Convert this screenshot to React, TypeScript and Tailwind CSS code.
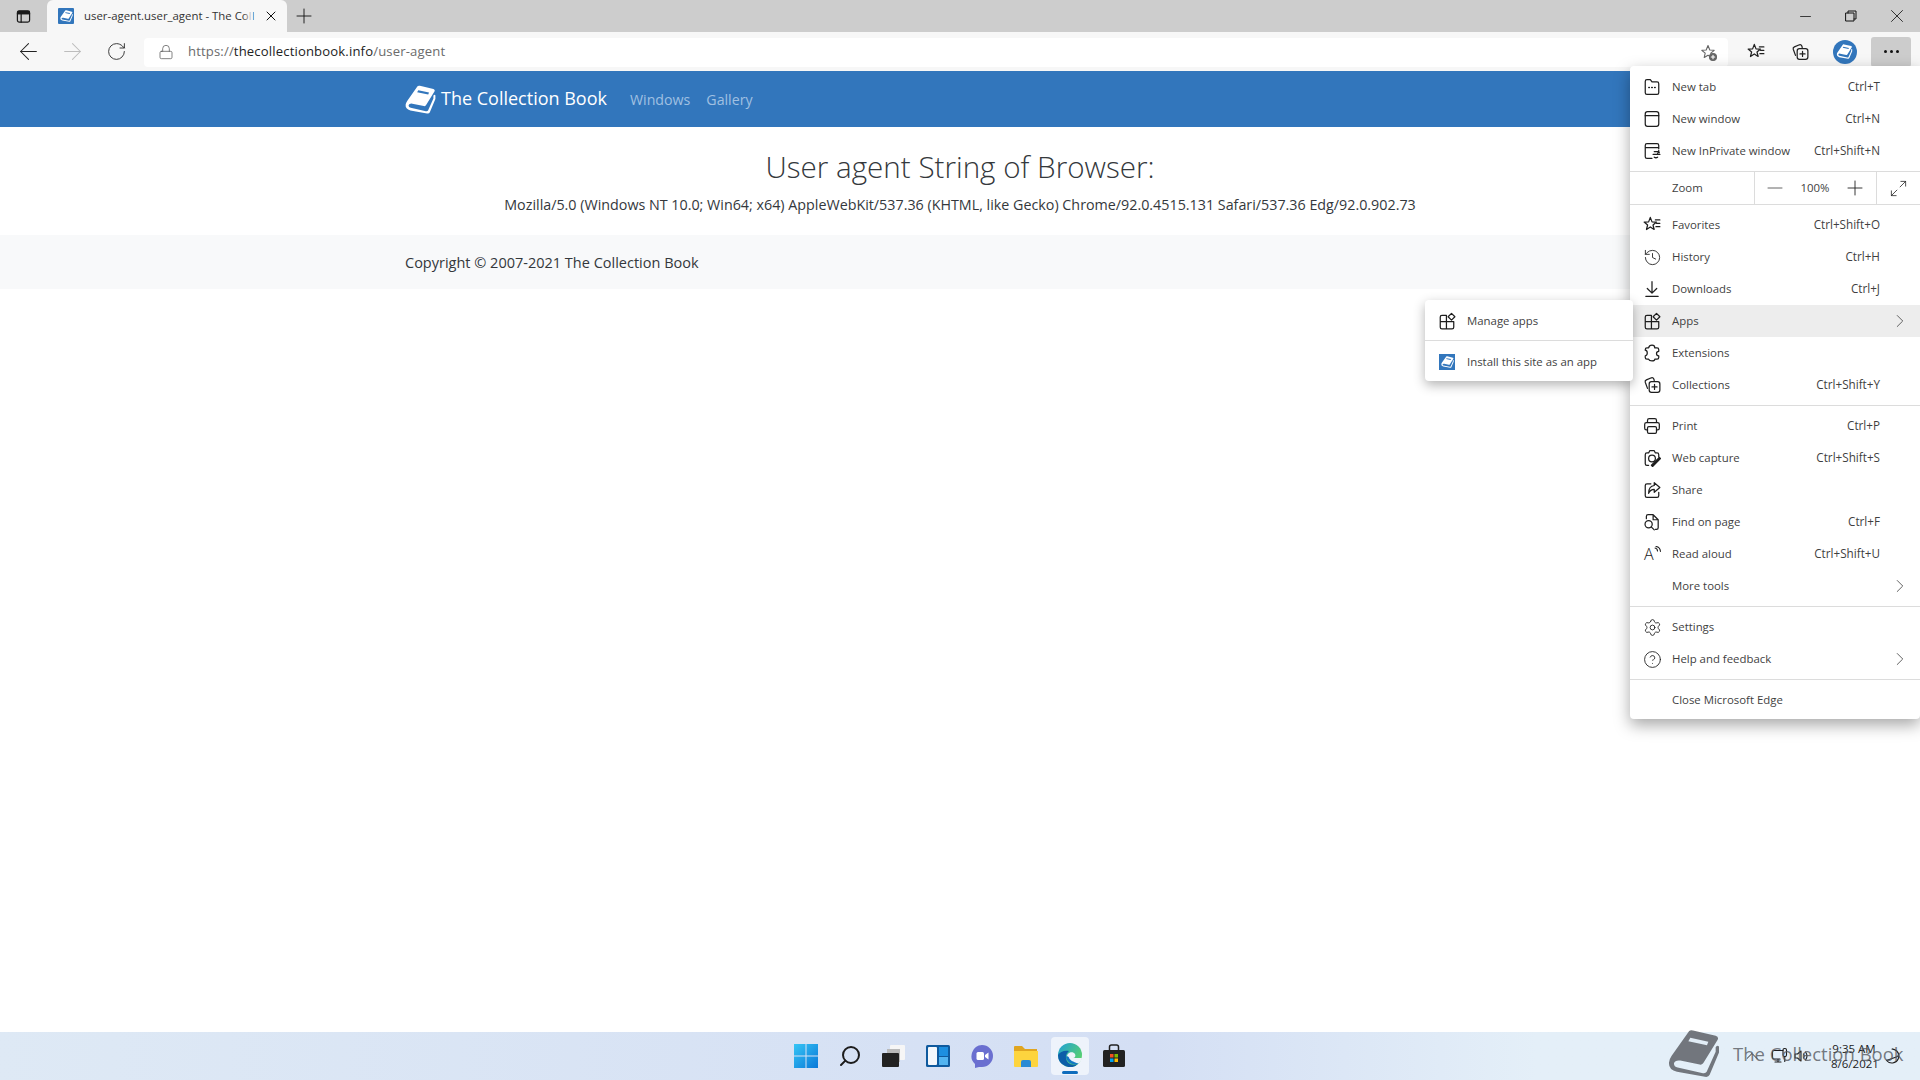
import { ReactNode } from "react";
import {
  ArrowLeft,
  ArrowRight,
  ChevronRight,
  ChevronUp,
  CircleHelp,
  History,
  Lock,
  Maximize2,
  Minus,
  Plus,
  RotateCw,
  Search,
  Settings,
  X,
} from "lucide-react";

const uiFont = "font-['Open_Sans','Noto_Sans',sans-serif]";

const Book = ({ className, cover = "#ffffff", cut = "#3276bc" }: { className?: string; cover?: string; cut?: string }) => (
  <svg viewBox="25 18 156 146" className={className}>
    <path
      fill={cover}
      d="M88 24 Q92 20 100 22 L168 38 Q178 41 174 50 L132 118 Q128 126 120 124 L62 112 Q46 110 43 120 Q42 130 54 133 L130 150 Q138 151 141 146 L168 86 V72 Q172 64 178 70 V88 L150 155 Q146 163 136 161 L52 146 Q26 140 28 118 Q29 108 36 98 Z"
    />
    <path fill={cut} d="M92 44 L146 56 L142 66 L86 54 Z" />
  </svg>
);

const line = { fill: "none", stroke: "currentColor", strokeWidth: 1.1, strokeLinecap: "round", strokeLinejoin: "round" } as const;

const Ico = ({ children, className = "w-[18px] h-[18px]" }: { children: ReactNode; className?: string }) => (
  <svg viewBox="0 0 16 16" className={className} {...line}>
    {children}
  </svg>
);

const FavStar = ({ className }: { className?: string }) => (
  <Ico className={className}>
    <path d="M6.500 1.200 8 5.200l4 .2-3.100 2.600 1 4-3.400-2.300-3.400 2.300 1-4L1 5.400l4-.2z" />
    <path d="M11 3.500h4M12 6.500h3M11.500 9.500h3.500" />
  </Ico>
);

const CollectionsIcon = ({ className }: { className?: string }) => (
  <Ico className={className}>
    <path d="M4 11 2 5.500Q1.500 4 3 3.400L7.500 1.600Q9 1.200 9.600 2.600L10 4" />
    <rect x="5.500" y="5" width="9.500" height="9.500" rx="2" />
    <path d="M10.250 7.500v4.500M8 9.750h4.500" />
  </Ico>
);

const AppsIcon = ({ className }: { className?: string }) => (
  <Ico className={className}>
    <path d="M7.500 3H3.500Q2 3 2 4.500v9Q2 15 3.500 15h9q1.500 0 1.500-1.500V8.500H7.500V3ZM7.500 8.500V15M2 8.500h5.500" />
    <path d="m12 1.200 3 3-3 3-3-3z" />
  </Ico>
);

const menuIcons: Record<string, ReactNode> = {
  "New tab": (
    <Ico>
      <path d="M2 4V3q0-1.500 1.500-1.500h3L8 3.500h4.500Q14 3.500 14 5v8q0 1.500-1.500 1.500h-9Q2 14.500 2 13Z" />
      <path d="M5.200 8.500h.4M7.800 8.500h.4M10.400 8.500h.4" strokeWidth="1.400" />
    </Ico>
  ),
  "New window": (
    <Ico>
      <rect x="2" y="1.500" width="12" height="13" rx="2" />
      <path d="M2 5h12" />
    </Ico>
  ),
  "New InPrivate window": (
    <Ico>
      <path d="M8 14.500H3.500Q2 14.500 2 13V3Q2 1.500 3.500 1.500h9Q14 1.500 14 3v3M2 5h12" />
      <path d="M10 8.500h3.500q1 0 1 1M9 11h6M10 13.500q1.500 1 3 0M13 10q1.500-1 1-2.500" />
    </Ico>
  ),
  Favorites: <FavStar className="w-[18px] h-[18px]" />,
  History: <History className="w-[19px] h-[19px]" strokeWidth={1.1} />,
  Downloads: (
    <Ico>
      <path d="M8 1.500v10M3.800 7.500 8 11.700l4.200-4.200M2.500 14.500h11" />
    </Ico>
  ),
  Apps: <AppsIcon className="w-[18px] h-[18px]" />,
  Extensions: (
    <Ico>
      <path d="M5 3.500q.5-2.500 3-2.500t2.500 2.500h2q1.500 0 1.500 1.500v1.500q-2 0-2 2t2 2v1.500q0 1.500-1.500 1.500h-2q0 1.500-2.500 1.500T5 13.500H3.500Q2 13.500 2 12v-1.500q1.800-.3 1.800-2.500T2 5.500V5q0-1.500 1.500-1.500Z" />
    </Ico>
  ),
  Collections: <CollectionsIcon className="w-[18px] h-[18px]" />,
  Print: (
    <Ico>
      <path d="M4 5V3q0-1.500 1.500-1.500h5Q12 1.500 12 3v2M4 11.500H3Q1.500 11.500 1.500 10V6.500Q1.500 5 3 5h10q1.500 0 1.500 1.500V10q0 1.500-1.500 1.500h-1" />
      <rect x="4" y="8.500" width="8" height="6" rx="1.200" />
    </Ico>
  ),
  "Web capture": (
    <Ico>
      <path d="M5 14.500H3.500Q2 14.500 2 13V5q0-1.500 1.500-1.500H5l1-2h4l1 2h1.500Q14 3.500 14 5v2" />
      <circle cx="8" cy="8.500" r="3" />
      <path d="M7.500 14.500 14.500 7.500 15.500 8.500 8.500 15.500Z" fill="currentColor" />
    </Ico>
  ),
  Share: (
    <Ico>
      <path d="M7 2.500H3.500Q2 2.500 2 4v9q0 1.500 1.500 1.500h9Q14 14.500 14 13v-3" />
      <path d="M10 1.500 15 5.700 10 10V7.500Q6.500 7.500 5 11 5 4.500 10 4Z" />
    </Ico>
  ),
  "Find on page": (
    <Ico>
      <path d="M3 5V3q0-1.500 1.500-1.500H9L13.500 6v7q0 1.500-1.500 1.500h-1M9 1.500V6h4.500" />
      <circle cx="5" cy="10" r="3.200" />
      <path d="m7.300 12.300 2.700 2.700" />
    </Ico>
  ),
  Settings: <Settings className="w-[19px] h-[19px]" strokeWidth={1.1} />,
  "Help and feedback": <CircleHelp className="w-[19px] h-[19px]" strokeWidth={1.1} />,
};

const Row = ({ label, keys, more, active }: { label: string; keys?: string; more?: boolean; active?: boolean }) => (
  <div className={`flex h-8 items-center pl-[14px] pr-[40px] relative ${active ? "bg-[#ededed]" : ""}`}>
    <span className="w-[28px] flex items-center text-[#1e1e1e] -ml-px mr-px">
      {label === "Read aloud" ? (
        <span className="relative flex items-center ml-px">
          <span className="text-[16px] leading-none font-light text-[#222]">A</span>
          <svg viewBox="0 0 8 8" className="w-2 h-2 -mt-2 text-[#222]" {...line}>
            <path d="M1 2q2.500.5 2.500 3M2 .5q4 .5 4.500 5" />
          </svg>
        </span>
      ) : (
        menuIcons[label]
      )}
    </span>
    <span className="flex-1 text-[#3f3f3f]">{label}</span>
    {keys && <span className="text-[#3f3f3f] text-[11.700px]">{keys}</span>}
    {more && <ChevronRight className="absolute right-[9px] w-[22px] h-[22px] text-[#555]" strokeWidth={1} />}
  </div>
);

const Rule = () => <div className="h-px bg-[#dcdcdc] my-1" />;

const BrowserMenu = () => (
  <div className="absolute left-[1630px] top-[66px] w-[290px] h-[653px] bg-white rounded-l-[4px] rounded-br-[4px] shadow-[0_6px_16px_rgba(0,0,0,0.35)] text-[11.400px] pt-[5px] z-10">
    <Row label="New tab" keys="Ctrl+T" />
    <Row label="New window" keys="Ctrl+N" />
    <Row label="New InPrivate window" keys="Ctrl+Shift+N" />
    <div className="h-px bg-[#dcdcdc] mt-1" />
    <div className="flex h-8 items-center text-[#3f3f3f]">
      <span className="w-[124px] pl-[42px]">Zoom</span>
      <div className="flex items-center h-full flex-1 border-x border-[#dcdcdc] pl-[8px]">
        <Minus className="w-6 h-6 text-[#666]" strokeWidth={1} />
        <span className="w-[56px] text-center">100%</span>
        <Plus className="w-6 h-6 text-[#222]" strokeWidth={0.9} />
      </div>
      <span className="w-[43px] flex justify-center">
        <Maximize2 className="w-[19px] h-[19px] text-[#222]" strokeWidth={1} />
      </span>
    </div>
    <div className="h-px bg-[#dcdcdc] mb-1" />
    <Row label="Favorites" keys="Ctrl+Shift+O" />
    <Row label="History" keys="Ctrl+H" />
    <Row label="Downloads" keys="Ctrl+J" />
    <Row label="Apps" more active />
    <Row label="Extensions" />
    <Row label="Collections" keys="Ctrl+Shift+Y" />
    <Rule />
    <Row label="Print" keys="Ctrl+P" />
    <Row label="Web capture" keys="Ctrl+Shift+S" />
    <Row label="Share" />
    <Row label="Find on page" keys="Ctrl+F" />
    <Row label="Read aloud" keys="Ctrl+Shift+U" />
    <Row label="More tools" more />
    <Rule />
    <Row label="Settings" />
    <Row label="Help and feedback" more />
    <Rule />
    <Row label="Close Microsoft Edge" />
  </div>
);

const AppsSubmenu = () => (
  <div className="absolute left-[1425px] top-[300px] w-[208px] h-[81px] bg-white rounded-[4px] shadow-[0_4px_12px_rgba(0,0,0,0.3)] text-[11.400px] text-[#3f3f3f] z-20">
    <div className="flex items-center h-10 pl-[13px] pt-[2px]">
      <AppsIcon className="w-[18px] h-[18px] mr-[11px] text-[#1e1e1e]" />
      Manage apps
    </div>
    <div className="h-px bg-[#dcdcdc]" />
    <div className="flex items-center h-10 pl-[14px] pt-[2px]">
      <span className="w-4 h-4 mr-[12px] bg-[#3276bc] flex items-center justify-center">
        <Book className="w-[13px] h-[12px]" />
      </span>
      Install this site as an app
    </div>
  </div>
);

const TabStrip = () => (
  <div className="flex h-8 shrink-0 bg-[#cdcdcd]">
    <div className="w-[47px] flex items-center justify-center">
      <svg viewBox="0 0 16 16" className="w-[15px] h-[15px] text-[#1a1a1a]" {...line} strokeWidth={1.3}>
        <rect x="1.500" y="2" width="13" height="12" rx="2" />
        <path d="M1.500 5h13M5.500 5v9" />
        <path d="M2 2.500h12v2.500H2z" fill="currentColor" />
      </svg>
    </div>
    <div className="w-[240px] bg-[#f7f7f7] rounded-t-[6px] flex items-center pl-[11px] pr-2 relative">
      <span className="w-4 h-4 bg-[#3276bc] rounded-[1px] flex items-center justify-center shrink-0">
        <Book className="w-[13px] h-[12px]" />
      </span>
      <span className="ml-[10px] w-[172px] overflow-hidden whitespace-nowrap text-[11.400px] text-[#333]">
        user-agent.user_agent - The Coll
      </span>
      <span className="absolute left-[196px] top-0 w-[10px] h-full bg-gradient-to-r from-transparent to-[#f7f7f7]" />
      <X className="absolute left-[216px] w-4 h-4 text-[#111]" strokeWidth={1.5} />
    </div>
    <div className="w-[34px] flex items-center justify-center">
      <Plus className="w-6 h-6 text-[#111]" strokeWidth={0.9} />
    </div>
    <div className="flex-1" />
    <div className="flex items-center text-[#111]">
      <span className="w-[46px] flex justify-center">
        <Minus className="w-[17px] h-[17px]" strokeWidth={1.1} />
      </span>
      <span className="w-[46px] flex justify-center">
        <svg viewBox="0 0 12 12" className="w-3 h-3" {...line} strokeWidth={1}>
          <rect x="1" y="3" width="8" height="8" />
          <path d="M3 3V1h8v8H9" />
        </svg>
      </span>
      <span className="w-[46px] flex justify-center">
        <X className="w-[22px] h-[22px]" strokeWidth={0.9} />
      </span>
    </div>
  </div>
);

const Toolbar = () => (
  <div className="flex items-center h-[39px] shrink-0 bg-[#f7f7f7] text-[#222]">
    <span className="w-[56px] flex justify-center">
      <ArrowLeft className="w-[27px] h-[27px]" strokeWidth={0.9} />
    </span>
    <span className="w-[32px] flex justify-center">
      <ArrowRight className="w-[27px] h-[27px] text-[#bdbdbd]" strokeWidth={0.9} />
    </span>
    <span className="w-[56px] flex justify-center">
      <RotateCw className="w-[21px] h-[21px]" strokeWidth={1} />
    </span>
    <div className="w-[1584px] h-[29px] bg-white rounded-[4px] flex items-center relative mt-[1px]">
      <Lock className="ml-[14px] w-4 h-4 text-[#555]" strokeWidth={1.1} />
      <span className="ml-[14px] text-[13.100px] text-[#6b6b6b] tracking-[0.15px]">
        https://<span className="text-[#222]">thecollectionbook.info</span>/user-agent
      </span>
      <span className="absolute left-[1556px] top-[6px] text-[#666]">
        <svg viewBox="0 0 18 18" className="w-[18px] h-[18px]" {...line}>
          <path d="M8 1.500 9.800 6l4.400.3-3.400 2.900 1 4.300L8 11.200l-3.800 2.300 1-4.300L1.800 6.300 6.200 6z" />
          <circle cx="13" cy="13" r="3.500" fill="#666" />
          <path d="M11.300 13h3.400M13 11.300v3.400" stroke="#fff" />
        </svg>
      </span>
    </div>
    <span className="ml-[6px] w-[44px] flex justify-center">
      <FavStar className="w-[18px] h-[18px]" />
    </span>
    <span className="w-[44px] flex justify-center">
      <CollectionsIcon className="w-[18px] h-[18px]" />
    </span>
    <span className="w-[45px] flex justify-center">
      <span className="w-6 h-6 rounded-full bg-[#3276bc] flex items-center justify-center">
        <Book className="w-[17px] h-[15px]" />
      </span>
    </span>
    <span className="ml-[4px] w-[40px] h-[30px] bg-[#cccccc] rounded-[3px] flex items-center justify-center gap-[3px]">
      <i className="w-[3px] h-[3px] rounded-full bg-[#111]" />
      <i className="w-[3px] h-[3px] rounded-full bg-[#111]" />
      <i className="w-[3px] h-[3px] rounded-full bg-[#111]" />
    </span>
  </div>
);

const Site = () => (
  <div className="flex-1 bg-white text-[#34383c]">
    <nav className="h-14 bg-[#3276bc] flex items-center pl-[405px]">
      <Book className="w-[31px] h-[29px]" />
      <span className="ml-[5px] -mt-px text-[18px] text-white">The Collection Book</span>
      <span className="ml-[23px] pt-px text-[14.200px] text-[#a0c0e2]">Windows</span>
      <span className="ml-[16px] pt-px text-[14.200px] text-[#a0c0e2]">Gallery</span>
    </nav>
    <h1 className="mt-[20px] h-[40px] text-center text-[29.600px] leading-[40px] font-light">User agent String of Browser:</h1>
    <p className="mt-[5px] h-[26px] text-center text-[14.300px] leading-[26px]">
      Mozilla/5.0 (Windows NT 10.0; Win64; x64) AppleWebKit/537.36 (KHTML, like Gecko) Chrome/92.0.4515.131 Safari/537.36 Edg/92.0.902.73
    </p>
    <footer className="mt-[17px] h-[54px] bg-[#f8f9fa] flex items-center pl-[405px] pt-px text-[14.500px]">
      Copyright © 2007-2021 The Collection Book
    </footer>
  </div>
);

const TaskIcon = ({ children, active }: { children: ReactNode; active?: boolean }) => (
  <div className="w-[44px] h-[44px] flex items-center justify-center">
    <div className={`w-[38px] h-[38px] rounded-[4px] flex items-center justify-center relative ${active ? "bg-[#eef3fb]" : ""}`}>
      {children}
      {active && <span className="absolute bottom-[1px] left-[11px] w-4 h-[3px] rounded-full bg-[#0f6cbd]" />}
    </div>
  </div>
);

const Taskbar = () => (
  <div className="h-[48px] shrink-0 bg-gradient-to-r from-[#dee9f5] via-[#d4dff4] via-60% to-[#e4eff8] to-80% flex items-center relative">
    <div className="flex-1" />
    <div className="flex items-center">
      <TaskIcon>
        <svg viewBox="0 0 24 24" className="w-6 h-6">
          <defs>
            <linearGradient id="win" x1="0" y1="0" x2="1" y2="1">
              <stop offset="0" stopColor="#36c5f5" />
              <stop offset="1" stopColor="#0a78d8" />
            </linearGradient>
          </defs>
          <path fill="url(#win)" d="M0 0h11.500v11.500H0zM12.500 0H24v11.500H12.500zM0 12.500h11.500V24H0zM12.500 12.500H24V24H12.500z" />
        </svg>
      </TaskIcon>
      <TaskIcon>
        <Search className="w-6 h-6 -scale-x-100 text-[#1c1c1c]" strokeWidth={2} />
      </TaskIcon>
      <TaskIcon>
        <svg viewBox="0 0 24 24" className="w-6 h-6">
          <rect x="8" y="1" width="15" height="15" rx="1" fill="#f6f6f6" />
          <rect x="5" y="5" width="13" height="13" fill="#b9b9b9" />
          <rect x="0" y="9" width="17" height="14" rx="1" fill="#222" />
        </svg>
      </TaskIcon>
      <TaskIcon>
        <svg viewBox="0 0 24 24" className="w-6 h-6">
          <rect x="0" y="1" width="24" height="22" rx="1.500" fill="#0f5a9e" />
          <rect x="2" y="3" width="9" height="18" rx="1" fill="#f4f8fc" />
          <rect x="13" y="3" width="9" height="9" fill="#1d8fe0" />
          <rect x="13" y="13" width="9" height="8" fill="#52b4f0" />
        </svg>
      </TaskIcon>
      <TaskIcon>
        <svg viewBox="0 0 24 24" className="w-6 h-6">
          <path fill="#6a6fd0" d="M12 1a11 11 0 0 1 0 22H9l-4 1v-4A11 11 0 0 1 12 1Z" />
          <rect x="6.500" y="8" width="7.500" height="8" rx="1.500" fill="#fff" />
          <path fill="#fff" d="m15 11 3.500-2.500v7L15 13z" />
        </svg>
      </TaskIcon>
      <TaskIcon>
        <svg viewBox="0 0 24 24" className="w-6 h-6">
          <path fill="#e0a520" d="M0 3q0-1 1-1h7l3 3h12v5H0z" />
          <path fill="#fdd43e" d="M0 7h24v15q0 1-1 1H1q-1 0-1-1z" />
          <path fill="#2a8ad4" d="M7 18q0-2 2-2h6q2 0 2 2v5H7z" />
        </svg>
      </TaskIcon>
      <TaskIcon active>
        <svg viewBox="0 0 24 24" className="w-6 h-6 -mt-[2px]">
          <defs>
            <linearGradient id="edge" x1="0" y1="0" x2="1" y2="0.700">
              <stop offset="0" stopColor="#1f9fd8" />
              <stop offset="1" stopColor="#5cd46a" />
            </linearGradient>
          </defs>
          <circle cx="12" cy="12" r="12" fill="url(#edge)" />
          <path fill="#0c5ea8" d="M0 12A12 12 0 0 0 20.500 20.500C14 24 7 20 8 13 8.300 11 9.500 9 11 8 6 7 2 9 0 12Z" />
          <path fill="#eef3fb" d="M9 14C9 9 15 8 17 11 18 13 17 15 15 15H24C23.500 17 22.500 19 20.500 20.500 16 21 10.500 19 9 14Z" />
          <path fill="#1279c4" d="M11 14.500C11.500 17 15 19 20.500 20.500 16 23 9 20 8 14 8.500 13 10 13 11 14.500Z" />
        </svg>
      </TaskIcon>
      <TaskIcon>
        <svg viewBox="0 0 24 24" className="w-6 h-6">
          <path d="M7.500 7V3q0-2 2-2h5q2 0 2 2v4" fill="none" stroke="#222" strokeWidth="1.500" />
          <rect x="1" y="6" width="22" height="17" rx="1.500" fill="#222" />
          <rect x="8" y="10" width="3.500" height="3.500" fill="#f25022" />
          <rect x="12.500" y="10" width="3.500" height="3.500" fill="#7fba00" />
          <rect x="8" y="14.500" width="3.500" height="3.500" fill="#00a4ef" />
          <rect x="12.500" y="14.500" width="3.500" height="3.500" fill="#ffb900" />
        </svg>
      </TaskIcon>
    </div>
    <div className="flex-1 flex items-center justify-end text-[#1c1c1c]">
      <ChevronUp className="w-5 h-5 mr-[9px]" strokeWidth={1.1} />
      <svg viewBox="0 0 18 18" className="w-[18px] h-[18px] mr-[4px]" {...line}>
        <path d="M9 12H3Q1.500 12 1.500 10.500V5Q1.500 3.500 3 3.500h9M7 12v3M4 15h6" />
        <rect x="12" y="1.500" width="3.500" height="8" rx="1.500" />
        <path d="M13.750 9.500v5" />
      </svg>
      <svg viewBox="0 0 18 18" className="w-[18px] h-[18px] mr-[20px]" {...line}>
        <path d="M2 7v4h2.500L8 14V4L4.500 7ZM10.500 7q1.500 2 0 4M12.500 5q3 4 0 8" />
      </svg>
      <div className={`${uiFont} text-[11.500px] leading-[15px] text-center w-[46px] mr-[7px] whitespace-nowrap`}>
        <div>9:35 AM</div>
        <div>8/6/2021</div>
      </div>
      <svg viewBox="0 0 18 18" className="w-[18px] h-[18px] mr-[18px]" {...line}>
        <path d="M8 2a7 7 0 1 1-5.500 11.500L15 9Q14 3 8 2Z" />
      </svg>
    </div>
    <div className="absolute left-[1668px] top-[-3px] flex items-center pointer-events-none">
      <Book className="w-[52px] h-[49px] opacity-90" cover="#666a70" cut="#e2edf6" />
      <span className={`ml-[13px] text-[18.500px] text-[#55595f]/80 ${uiFont}`}>The Collection Book</span>
    </div>
  </div>
);

export default function App() {
  return (
    <div className={`relative flex flex-col w-[1920px] h-[1080px] overflow-hidden bg-white ${uiFont}`}>
      <TabStrip />
      <Toolbar />
      <Site />
      <Taskbar />
      <BrowserMenu />
      <AppsSubmenu />
    </div>
  );
}
